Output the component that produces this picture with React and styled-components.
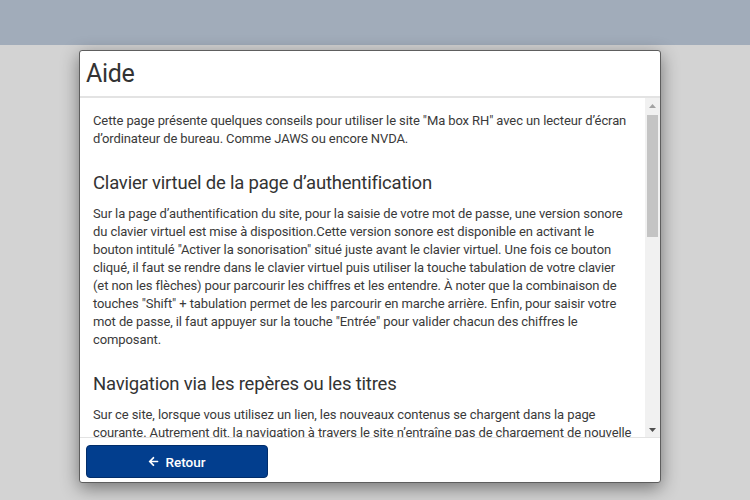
import React from "react";
import styled, { createGlobalStyle } from "styled-components";
import { FaArrowLeft } from "react-icons/fa";

const Global = createGlobalStyle`
  html, body { margin: 0; padding: 0; }
  body {
    background: #d3d3d3;
    font-family: Roboto, "Liberation Sans", sans-serif;
    width: 750px;
    height: 500px;
    overflow: hidden;
  }
`;

const Page = styled.div`
  display: flex;
  flex-direction: column;
  height: 500px;
`;

const TopBand = styled.div`
  height: 45px;
  background: #a1acba;
  flex-shrink: 0;
`;

const Modal = styled.div`
  margin: 5px 0 0 79px;
  width: 582px;
  height: 433px;
  box-sizing: border-box;
  background: #fff;
  border: 1px solid #5e5e5e;
  border-radius: 3px;
  box-shadow: 0 5px 18px rgba(0, 0, 0, 0.45);
  display: flex;
  flex-direction: column;
  overflow: hidden;
`;

const Header = styled.div`
  height: 45px;
  border-bottom: 2px solid #e3e3e3;
  display: flex;
  align-items: center;
  padding: 0 6px;
  flex-shrink: 0;
`;

const Title = styled.h1`
  margin: 0;
  font-size: 25px;
  font-weight: 400;
  color: #333;
  letter-spacing: -0.3px;
`;

const Body = styled.div`
  flex: 1;
  min-height: 0;
  display: flex;
`;

const Content = styled.div`
  flex: 1;
  min-width: 0;
  overflow: hidden;
  padding: 14px 13px 0 13px;
  color: #3a3a3a;
`;

const ScrollBar = styled.div`
  width: 15px;
  flex-shrink: 0;
  background: #f1f1f1;
  display: flex;
  flex-direction: column;
`;

const ScrollButton = styled.div`
  height: 15px;
  flex-shrink: 0;
  display: flex;
  align-items: center;
  justify-content: center;
  color: ${(p) => (p.$active ? "#505050" : "#a3a3a3")};
`;

const Track = styled.div`
  flex: 1;
  padding: 2px 2px 0 2px;
`;

const Thumb = styled.div`
  height: 122px;
  background: #c4c4c4;
`;

const Para = styled.p`
  margin: 0 0 23px;
  font-size: 13px;
  line-height: 18px;
  letter-spacing: -0.1px;
`;

const Heading = styled.h2`
  margin: 0 0 10px;
  font-size: 18.5px;
  line-height: 24px;
  font-weight: 400;
  color: #333;
  letter-spacing: -0.2px;
`;

const Footer = styled.div`
  height: 45px;
  border-top: 1px solid #e3e3e3;
  flex-shrink: 0;
  display: flex;
  align-items: flex-start;
  padding: 7px 6px 0;
  box-sizing: border-box;
`;

const BackButton = styled.button`
  width: 182px;
  height: 33px;
  background: #023e8e;
  border: 1px solid #012d6a;
  border-radius: 4px;
  color: #fff;
  font-family: Roboto, "Liberation Sans", sans-serif;
  font-size: 13.5px;
  font-weight: 500;
  display: flex;
  align-items: center;
  justify-content: center;
  gap: 6px;
  cursor: pointer;
`;

const Triangle = ({ up }) => (
  <svg width="7" height="4" viewBox="0 0 7 4" aria-hidden="true">
    <polygon points={up ? "0,4 7,4 3.5,0" : "0,0 7,0 3.5,4"} fill="currentColor" />
  </svg>
);

const sections = [
  {
    title: "Clavier virtuel de la page d’authentification",
    text:
      "Sur la page d’authentification du site, pour la saisie de votre mot de passe, une version sonore du clavier virtuel est mise à disposition.Cette version sonore est disponible en activant le bouton intitulé \"Activer la sonorisation\" situé juste avant le clavier virtuel. Une fois ce bouton cliqué, il faut se rendre dans le clavier virtuel puis utiliser la touche tabulation de votre clavier (et non les flèches) pour parcourir les chiffres et les entendre. À noter que la combinaison de touches \"Shift\" + tabulation permet de les parcourir en marche arrière. Enfin, pour saisir votre mot de passe, il faut appuyer sur la touche \"Entrée\" pour valider chacun des chiffres le composant.",
  },
  {
    title: "Navigation via les repères ou les titres",
    text:
      "Sur ce site, lorsque vous utilisez un lien, les nouveaux contenus se chargent dans la page courante. Autrement dit, la navigation à travers le site n’entraîne pas de chargement de nouvelle page. Pour accéder rapidement au contenu principal, utilisez les repères de navigation (landmarks) ou la liste des titres de votre lecteur d’écran.",
  },
  {
    title: "Formulaires",
    text:
      "Les champs de formulaire sont associés à des étiquettes explicites. Les champs obligatoires sont signalés dans l’intitulé du champ. En cas d’erreur de saisie, un message vous indique la nature de l’erreur et le champ concerné.",
  },
  {
    title: "Documents à télécharger",
    text:
      "Les documents proposés au téléchargement sont au format PDF. Le format et le poids de chaque fichier sont précisés dans l’intitulé du lien.",
  },
  {
    title: "Déconnexion",
    text:
      "Pour des raisons de sécurité, pensez à vous déconnecter à l’aide du bouton \"Déconnexion\" lorsque vous avez terminé.",
  },
];

export default function App() {
  return (
    <>
      <Global />
      <Page>
        <TopBand />
        <Modal>
          <Header>
            <Title>Aide</Title>
          </Header>
          <Body>
            <Content>
              <Para>
                Cette page présente quelques conseils pour utiliser le site "Ma box RH" avec un
                lecteur d’écran d’ordinateur de bureau. Comme JAWS ou encore NVDA.
              </Para>
              {sections.map((s) => (
                <React.Fragment key={s.title}>
                  <Heading>{s.title}</Heading>
                  <Para>{s.text}</Para>
                </React.Fragment>
              ))}
            </Content>
            <ScrollBar>
              <ScrollButton>
                <Triangle up />
              </ScrollButton>
              <Track>
                <Thumb />
              </Track>
              <ScrollButton $active>
                <Triangle />
              </ScrollButton>
            </ScrollBar>
          </Body>
          <Footer>
            <BackButton>
              <FaArrowLeft size={11} />
              Retour
            </BackButton>
          </Footer>
        </Modal>
      </Page>
    </>
  );
}
